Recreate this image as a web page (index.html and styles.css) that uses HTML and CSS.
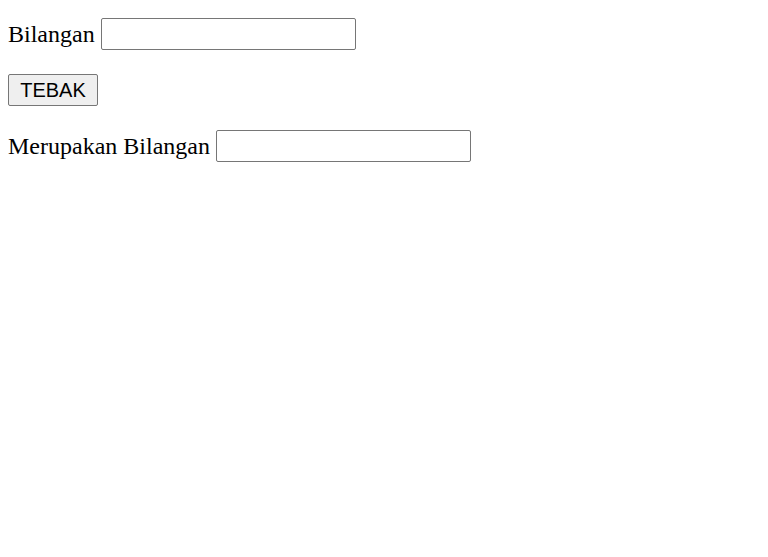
FILE: index.html
```html
<!DOCTYPE html>
<html>
<head>
<meta charset="utf-8">
<title>Tebak Bilangan</title>
<link rel="stylesheet" href="styles.css">
</head>
<body>
<form class="form">
  <div class="row">
    <label class="label" for="bil">Bilangan</label>
    <input class="field" type="text" id="bil">
  </div>
  <div class="row">
    <button class="btn" type="button">TEBAK</button>
  </div>
  <div class="row">
    <label class="label" for="hasil">Merupakan Bilangan</label>
    <input class="field" type="text" id="hasil">
  </div>
</form>
</body>
</html>
```

FILE: styles.css
```css
html, body {
  background: #ffffff;
}
body {
  margin: 8px;
  font-family: "Liberation Serif", "Times New Roman", serif;
  font-size: 24px;
  color: #000000;
}
.form {
  display: flex;
  flex-direction: column;
  gap: 24px;
  padding-top: 10px;
}
.row {
  display: flex;
  align-items: center;
  gap: 6px;
  height: 32px;
}
.label {
  line-height: normal;
}
.field {
  box-sizing: border-box;
  width: 255px;
  height: 32px;
  margin: 0;
  padding: 1px 2px;
  border: 1px solid #767676;
  border-radius: 2px;
  background: #ffffff;
  font-family: "Liberation Sans", Arial, sans-serif;
  font-size: 24px;
}
.btn {
  box-sizing: border-box;
  width: 90px;
  height: 32px;
  margin: 0;
  padding: 0;
  border: 1px solid #767676;
  border-radius: 2px;
  background: #efefef;
  color: #000000;
  font-family: "Liberation Sans", Arial, sans-serif;
  font-size: 20px;
  line-height: 1;
}
```
